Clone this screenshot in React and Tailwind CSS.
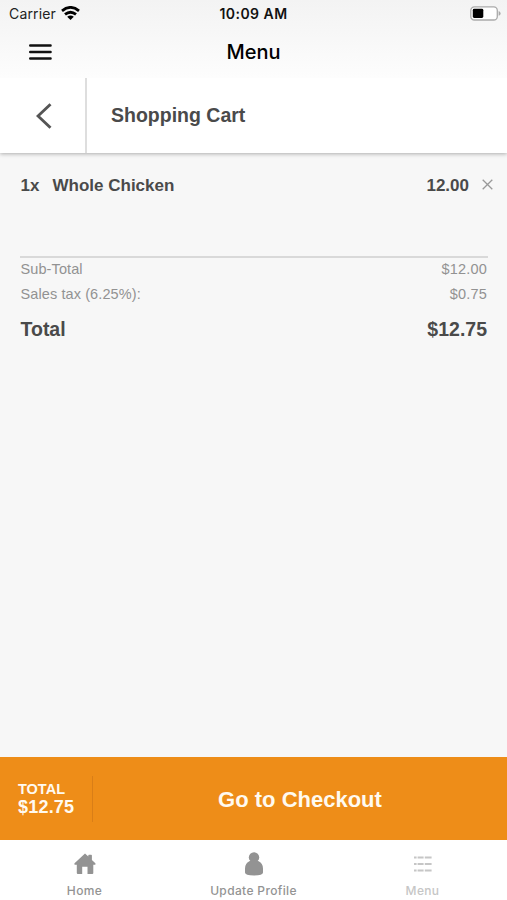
const tabs = [
  { name: 'Home', color: 'text-[#939393]', icon: <HomeIcon /> },
  { name: 'Update Profile', color: 'text-[#939393]', icon: <ProfileIcon /> },
  { name: 'Menu', color: 'text-[#c6c6c6]', icon: <MenuIcon /> },
];

function HomeIcon() {
  return (
    <svg width="22" height="22" viewBox="0 0 22 22" fill="currentColor">
      <path d="M11 .6 14.3 3.6V2.4q0-.7.7-.7h2.2q.7 0 .7.7V7l3.2 3q.6.6.4 1.2-.2.5-.9.5h-1.3v8.4q0 1-1 1h-4.8v-7.4H8.2v7.4H3.8q-1 0-1-1v-8.4H1.3q-.7 0-.9-.5-.2-.6.4-1.2z" />
    </svg>
  );
}

function ProfileIcon() {
  return (
    <svg width="20" height="24" viewBox="0 0 20 24" fill="currentColor">
      <circle cx="10" cy="5.4" r="5.2" />
      <path d="M5.8 9h8.4q4.8 2.4 4.8 7.4v4.2q0 3-9 3t-9-3v-4.2q0-5 4.8-7.4z" />
    </svg>
  );
}

function MenuIcon() {
  return (
    <svg width="20" height="18" viewBox="0 0 20 18" fill="none" stroke="currentColor" strokeWidth="2.2">
      {[2.5, 9, 15.5].map((y) => (
        <path key={y} d={`M1 ${y}h2.6M4.6 ${y}h6M11.8 ${y}h6.8`} />
      ))}
    </svg>
  );
}

function StatusBar() {
  return (
    <div className="grid h-[27px] grid-cols-3 items-center pr-[6px] pl-[9px] text-[14px] text-[#222]">
      <div className="flex items-center gap-[5px]">
        <span className="tracking-[0.15px]">Carrier</span>
        <svg className="-mt-0.5" width="19" height="14" viewBox="0 0 19 14" fill="none" stroke="#000" strokeWidth="2.8">
          <path d="M1 4.8q8.5-6.8 17 0M4 8.4q5.5-4.4 11 0" />
          <path d="M6.2 10.8q3.3-2.6 6.6 0l-3.3 3.2z" fill="#000" stroke="none" />
        </svg>
      </div>
      <span className="-ml-[3px] text-center font-semibold tracking-[0.45px] whitespace-nowrap text-[#111]">10:09 AM</span>
      <svg className="-mt-px justify-self-end" width="31" height="15" viewBox="0 0 31 15">
        <rect x=".8" y=".8" width="26.5" height="13.2" rx="3.6" fill="#fff" stroke="#aaa" strokeWidth="1.3" />
        <rect x="2.8" y="2.8" width="10.5" height="9.2" rx="1.4" />
        <path d="M28.6 5q2 .8 2 2.4t-2 2.4z" fill="#aaa" />
      </svg>
    </div>
  );
}

function App() {
  return (
    <div className="flex h-screen flex-col bg-[#f7f7f7] font-['Liberation_Sans',sans-serif] text-[#4a4a4a]">
      <header className="relative z-10 h-[78px] bg-linear-to-b from-[#f3f3f3] to-[#fdfdfd] font-['Inter',sans-serif]">
        <StatusBar />
        <div className="grid h-[50px] grid-cols-3 items-center px-[29px]">
          <svg width="23" height="18" viewBox="0 0 23 18" stroke="#111" strokeWidth="2.4" strokeLinecap="round">
            <path d="M1.2 2.5h20.4M1.2 9h20.4M1.2 15.5h20.4" />
          </svg>
          <h1 className="text-center text-[20px] font-medium text-black">Menu</h1>
        </div>
      </header>

      <div className="flex h-[75px] shrink-0 items-center bg-white shadow-[0_1px_4px_rgba(0,0,0,0.3)]">
        <button className="flex h-full w-[87px] items-center justify-center border-r-2 border-[#dedede]">
          <svg className="ml-0.5" width="16" height="26" viewBox="0 0 16 26" fill="none" stroke="#555" strokeWidth="2.9">
            <path d="M14.5 1.2 2 13l12.5 11.8" />
          </svg>
        </button>
        <h2 className="pl-6 text-[19.5px] font-bold">Shopping Cart</h2>
      </div>

      <main className="flex-1 pt-[22px] pr-[19px] pl-5">
        <div className="flex h-[22px] items-center pl-[0.5px] text-[17px] font-bold">
          <span className="w-8">1x</span>
          <span className="flex-1">Whole Chicken</span>
          <span>12.00</span>
          <svg className="-mt-1 -mr-[5px] ml-[13px]" width="11" height="11" viewBox="0 0 11 11" stroke="#999" strokeWidth="1.3">
            <path d="M.7 .7l9.6 9.6M10.3 .7.7 10.3" />
          </svg>
        </div>
        <div className="mt-[59px] border-t-2 border-[#d9d9d9] pr-px pl-[0.5px] text-[14.5px] text-[#929292]">
          <div className="flex h-6 items-center justify-between">
            <span className="tracking-[0.1px]">Sub-Total</span>
            <span className="tracking-[0.2px]">$12.00</span>
          </div>
          <div className="flex h-[25px] items-center justify-between">
            <span className="tracking-[0.1px]">Sales tax (6.25%):</span>
            <span className="tracking-[0.2px]">$0.75</span>
          </div>
        </div>
        <div className="mt-[7px] flex h-8 items-center justify-between pr-px pl-[0.5px] text-[19.5px] font-bold">
          <span>Total</span>
          <span>$12.75</span>
        </div>
      </main>

      <div className="flex h-[83px] shrink-0 items-center bg-[#ee8d18] font-bold text-[#fffaf0]">
        <div className="flex h-[46px] w-[93px] flex-col justify-center border-r border-[#d97e17] pb-0.5 pl-[18px]">
          <span className="text-[14.5px] leading-[18px]">TOTAL</span>
          <span className="text-[18px] leading-[18px] tracking-[0.2px]">$12.75</span>
        </div>
        <button className="flex-1 pt-0.5 text-[22px] font-bold">Go to Checkout</button>
      </div>

      <nav className="grid h-[60px] shrink-0 grid-cols-3 bg-white font-['Inter',sans-serif] text-[12px] font-medium">
        {tabs.map((tab) => (
          <a key={tab.name} className={`flex flex-col items-center pt-[11px] ${tab.color}`}>
            <span className="flex h-[25px] items-center">{tab.icon}</span>
            <span className="mt-[6px] leading-[17px] tracking-[0.35px]">{tab.name}</span>
          </a>
        ))}
      </nav>
    </div>
  );
}

export default App;
